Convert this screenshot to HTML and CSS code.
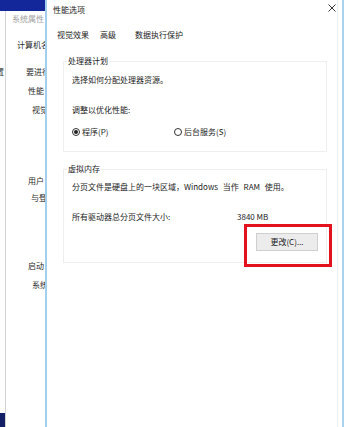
FILE: index.html
```html
<!DOCTYPE html>
<html lang="zh-CN">
<head>
<meta charset="utf-8">
<title>性能选项</title>
<link rel="stylesheet" href="styles.css">
</head>
<body>
<div class="desktop">
  <div class="top-band"></div>
  <div class="back-win"><span class="back-char">设置</span></div>
  <div class="corner-bit"></div>

  <section class="win sysprops">
    <div class="sp-title">系统属性</div>
    <div class="sp-item sp-tab">计算机名</div>
    <div class="sp-item sp-a">要进行</div>
    <div class="sp-item sp-b">性能</div>
    <div class="sp-item sp-c">视觉</div>
    <div class="sp-item sp-d">用户</div>
    <div class="sp-item sp-e">与登</div>
    <div class="sp-item sp-f">启动</div>
    <div class="sp-item sp-g">系统</div>
  </section>

  <section class="win dialog">
    <header class="titlebar">
      <span class="title">性能选项</span>
      <svg class="close" width="8" height="8" viewBox="0 0 8 8" aria-hidden="true">
        <path d="M0.5 0.5 L7.5 7.5 M7.5 0.5 L0.5 7.5" stroke="#333" stroke-width="1" fill="none"/>
      </svg>
    </header>
    <nav class="tabs">
      <span class="tab tab-visual">视觉效果</span>
      <span class="tab tab-adv">高级</span>
      <span class="tab tab-dep">数据执行保护</span>
    </nav>
    <div class="panel">
      <fieldset class="group group-cpu">
        <legend>处理器计划</legend>
        <p class="line">选择如何分配处理器资源。</p>
        <p class="line gap-lg">调整以优化性能:</p>
        <div class="radios">
          <label class="radio"><span class="dot checked"></span>程序(P)</label>
          <label class="radio"><span class="dot"></span>后台服务(S)</label>
        </div>
      </fieldset>
      <fieldset class="group group-vm">
        <legend>虚拟内存</legend>
        <p class="line wide">分页文件是硬盘上的一块区域，Windows 当作 RAM 使用。</p>
        <div class="size-row line gap-lg">
          <span class="size-label">所有驱动器总分页文件大小:</span>
          <span class="size-val">3840 MB</span>
        </div>
        <div class="btn-row">
          <span class="btn-wrap"><button class="btn">更改(C)...</button></span>
        </div>
      </fieldset>
    </div>
  </section>
</div>
</body>
</html>
```

FILE: styles.css
```css
* { box-sizing: border-box; }

html, body {
  margin: 0;
  padding: 0;
}

body {
  width: 344px;
  height: 427px;
  overflow: hidden;
  background: #ffffff;
  font-family: "Noto Sans CJK SC", "Noto Sans", sans-serif;
  font-size: 8px;
  line-height: 10px;
  color: #1c1c1c;
}

.desktop {
  position: relative;
  width: 344px;
  height: 427px;
  background: #ffffff;
  overflow: hidden;
}

.top-band {
  position: absolute;
  left: 0;
  top: 0;
  width: 46px;
  height: 11px;
  background: #13279a;
}

.back-win {
  position: absolute;
  left: 0;
  top: 11px;
  width: 6px;
  height: 402px;
  background: #fdfdfd;
  overflow: hidden;
}

.back-char {
  position: absolute;
  left: -12px;
  top: 56px;
  white-space: nowrap;
  color: #333;
}

.corner-bit {
  position: absolute;
  left: 0;
  top: 413px;
  width: 6px;
  height: 14px;
  background: #142066;
}

.win {
  position: absolute;
  background: #ffffff;
}

/* ----- background window: 系统属性 ----- */
.sysprops {
  left: 5px;
  top: 11px;
  width: 60px;
  bottom: 0;
  border-left: 1px solid #d4d4d4;
  padding-top: 3px;
}

.sp-title {
  padding-left: 6px;
  color: #a0a0a0;
  white-space: nowrap;
}

.sp-item {
  white-space: nowrap;
  color: #2a2a2a;
}

.sp-tab { margin-top: 16px; padding-left: 11px; }
.sp-a { margin-top: 17px; padding-left: 20px; }
.sp-b { margin-top: 9px; padding-left: 22px; }
.sp-c { margin-top: 9px; padding-left: 26px; }
.sp-d { margin-top: 61px; padding-left: 22px; }
.sp-e { margin-top: 7px; padding-left: 25px; }
.sp-f { margin-top: 58px; padding-left: 22px; }
.sp-g { margin-top: 9px; padding-left: 26px; }

/* ----- foreground dialog: 性能选项 ----- */
.dialog {
  left: 45px;
  top: 0;
  width: 299px;
  height: 427px;
  border-left: 2px solid #a3cfee;
  border-right: 2px solid #a9d3ef;
  box-shadow: inset -4px 0 0 #ffffff, inset -5px 0 0 #eeeeee;
}

.titlebar {
  height: 25px;
  padding: 5px 6px 0 6px;
  display: flex;
  justify-content: space-between;
  align-items: flex-start;
}

.close {
  display: block;
  margin-top: -1px;
}

.tabs {
  height: 31px;
  padding: 5px 0 0 10px;
  display: flex;
  white-space: nowrap;
}

.tab-adv { margin-left: 11px; }
.tab-dep { margin-left: 19px; }

.panel {
  padding: 0 15px 0 16px;
}

.group {
  margin: 0;
  padding: 9px 8px 14px 8px;
  border: 1px solid #eeeeee;
  min-width: 0;
}

.group legend {
  padding: 0 1px;
  margin-left: -5px;
  line-height: 10px;
}

.group-vm {
  margin-top: 12px;
  padding-top: 8px;
  padding-bottom: 11px;
}

.line {
  margin: 0;
  line-height: 10px;
  white-space: nowrap;
}

.wide {
  word-spacing: 3px;
}

.gap-lg { margin-top: 20px; }

.radios {
  margin-top: 12px;
  display: grid;
  grid-template-columns: 102px auto;
  line-height: 10px;
}

.radio {
  display: flex;
  align-items: center;
  white-space: nowrap;
}

.dot {
  width: 8px;
  height: 8px;
  border: 1px solid #333;
  border-radius: 50%;
  margin-right: 2px;
  display: flex;
  align-items: center;
  justify-content: center;
  background: #fff;
}

.dot.checked::after {
  content: "";
  width: 4px;
  height: 4px;
  border-radius: 50%;
  background: #222;
}

.size-row {
  display: flex;
}

.size-label {
  width: 165px;
}

.btn-row {
  margin-top: 11px;
  display: flex;
  justify-content: flex-end;
}

.btn-wrap {
  position: relative;
  display: block;
}

.btn-wrap::after {
  content: "";
  position: absolute;
  left: -12px;
  top: -9px;
  right: -14px;
  bottom: -16px;
  border: 3px solid #e3121d;
  pointer-events: none;
}

.btn {
  display: block;
  width: 62px;
  height: 18px;
  margin: 0;
  padding: 0;
  border: 1px solid #cfcfcf;
  background: #ececec;
  font-family: "Noto Sans CJK SC", "Noto Sans", sans-serif;
  font-size: 8px;
  line-height: 16px;
  color: #1c1c1c;
  text-align: center;
}
```
